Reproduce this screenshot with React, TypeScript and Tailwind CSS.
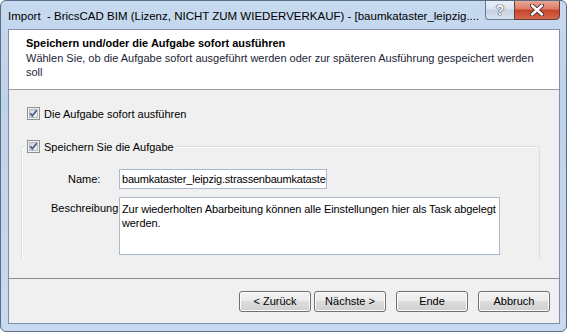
import React from 'react';

const CheckBox: React.FC = () => (
  <svg width="13" height="13" viewBox="0 0 13 13" className="shrink-0">
    <defs>
      <linearGradient id="cbfill" x1="0" y1="0" x2="1" y2="1">
        <stop offset="0" stopColor="#cfd3d9" />
        <stop offset="1" stopColor="#f4f5f7" />
      </linearGradient>
    </defs>
    <rect x="0.5" y="0.5" width="12" height="12" fill="#f4f4f4" stroke="#8e8f8f" />
    <rect x="2.5" y="2.5" width="8" height="8" fill="url(#cbfill)" stroke="#b4b8bf" strokeWidth="1" />
    <path d="M3.3 6.2 L5.3 8.8 L9.7 3.3" fill="none" stroke="#4b5f8d" strokeWidth="1.7" />
  </svg>
);

const WizardButton: React.FC<{ label: string }> = ({ label }) => (
  <button className="w-[72px] h-[21px] rounded-[3px] border border-[#707070] bg-[linear-gradient(#f2f2f2_0%,#ebebeb_50%,#dddddd_50%,#cfcfcf_100%)] shadow-[inset_0_0_0_1px_#fcfcfc] text-[11px] text-black leading-none flex items-center justify-center">
    {label}
  </button>
);

export default function App() {
  return (
    <div
      className="w-[567px] h-[332px] flex flex-col rounded-[6px] border border-[#5b6d84] bg-[linear-gradient(#c6d9ef,#bdd2eb_30%,#c8daef)] overflow-hidden"
      style={{ fontFamily: '"Liberation Sans", Arial, sans-serif' }}
    >
      {/* Title bar */}
      <div className="h-[28px] flex items-start shrink-0">
        <div className="pl-[7px] pt-[8px] text-[11.5px] leading-[14px] text-black whitespace-nowrap flex-1 min-w-0 overflow-hidden">
          Import&nbsp; - BricsCAD BIM (Lizenz, NICHT ZUM WIEDERVERKAUF) - [baumkataster_leipzig....
        </div>
        <div className="flex shrink-0 ml-[4px] mr-[6px] -mt-px">
          <div className="w-[29px] h-[20px] border border-[#6b7b8f] border-r-0 rounded-bl-[4px] bg-[linear-gradient(#e9eff7_0%,#d9e3ef_45%,#c3d1e2_50%,#d6e2ef_100%)] flex items-center justify-center">
            <span className="text-[14px] font-bold text-white leading-none [text-shadow:0_0_1px_#333,0_0_1px_#333,0_0_1px_#333]">?</span>
          </div>
          <div className="w-[46px] h-[20px] border border-[#6b3b34] rounded-br-[4px] bg-[linear-gradient(#e8a898_0%,#dc7a64_45%,#c6432b_50%,#d5684c_100%)] flex items-center justify-center">
            <svg width="14" height="12" viewBox="0 0 14 12">
              <path d="M2 1.5 L12 10.5 M12 1.5 L2 10.5" stroke="#3b2a28" strokeWidth="4.2" strokeLinecap="round" />
              <path d="M2 1.5 L12 10.5 M12 1.5 L2 10.5" stroke="#ffffff" strokeWidth="2.4" strokeLinecap="round" />
            </svg>
          </div>
        </div>
      </div>

      {/* Client area */}
      <div className="ml-[7px] mr-[6px] mb-[7px] flex-1 flex flex-col border border-[#7e91ab] bg-[#f0f0f0] text-[11px] leading-[14px] text-black">
        {/* Header */}
        <div className="h-[60px] shrink-0 bg-white border-b border-[#a0a0a0] pl-[17px] pt-[6px]">
          <div className="font-bold">Speichern und/oder die Aufgabe sofort ausführen</div>
          <div className="mt-px text-[#1b2536]">
            Wählen Sie, ob die Aufgabe sofort ausgeführt werden oder zur späteren Ausführung gespeichert werden
            <br />
            soll
          </div>
        </div>

        {/* Body */}
        <div className="h-[188px] shrink-0 flex flex-col">
          <div className="mt-[17px] ml-[18px] h-[13px] flex items-center gap-[4px]">
            <CheckBox />
            <span>Die Aufgabe sofort ausführen</span>
          </div>

          <div className="relative mt-[26px] ml-[12px] w-[519px] h-[113px] border border-b-0 border-[#d5dfe5] rounded-t-[3px] shadow-[inset_1px_1px_0_#ffffff]">
            <div className="absolute left-[3px] -top-[7px] h-[13px] px-[2px] bg-[#f0f0f0] flex items-center gap-[4px]">
              <CheckBox />
              <span>Speichern Sie die Aufgabe</span>
            </div>

            <div className="mt-[22px] flex items-center">
              <span className="w-[97px] pl-[46px]">Name:</span>
              <div className="w-[208px] h-[20px] border border-[#abb9cc] bg-white pl-[2px] flex items-center whitespace-nowrap tracking-[-0.2px]">
                baumkataster_leipzig.strassenbaumkataste
              </div>
            </div>

            <div className="mt-[8px] flex items-start">
              <span className="w-[97px] pl-[29px] pt-[4px] whitespace-nowrap">Beschreibung</span>
              <div className="w-[381px] h-[58px] border border-[#abb9cc] bg-white pl-[2px] pt-[4px] whitespace-nowrap overflow-hidden tracking-[-0.1px]">
                Zur wiederholten Abarbeitung können alle Einstellungen hier als Task abgelegt
                <br />
                werden.
              </div>
            </div>
          </div>
        </div>

        {/* Separator + footer */}
        <div className="flex-1 border-t border-[#8d8d8d] flex justify-end items-start pt-[12px] pr-[9px]">
          <WizardButton label="< Zurück" />
          <div className="ml-[3px]">
            <WizardButton label="Nächste >" />
          </div>
          <div className="ml-[10px]">
            <WizardButton label="Ende" />
          </div>
          <div className="ml-[10px]">
            <WizardButton label="Abbruch" />
          </div>
        </div>
      </div>
    </div>
  );
}
